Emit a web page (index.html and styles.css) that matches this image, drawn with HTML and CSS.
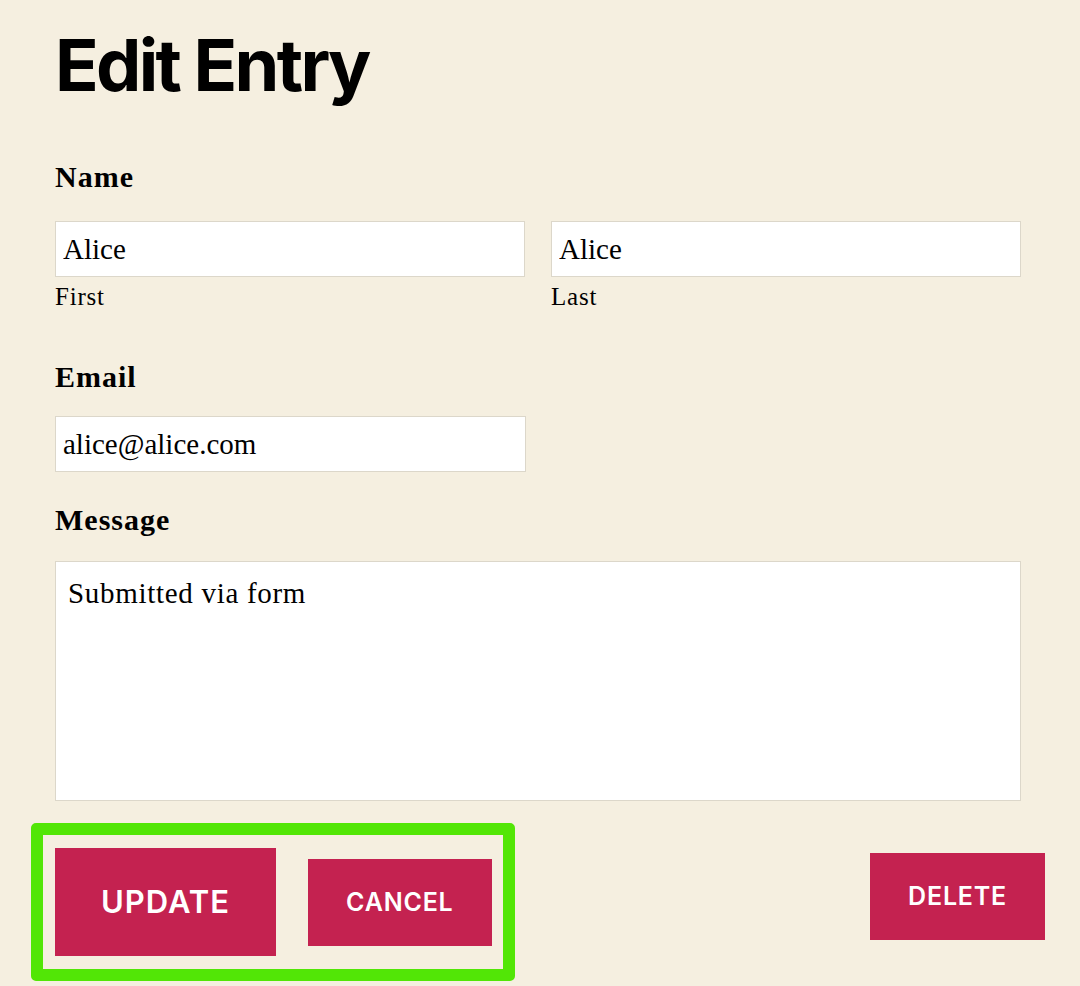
FILE: index.html
```html
<!DOCTYPE html>
<html lang="en">
<head>
<meta charset="utf-8">
<title>Edit Entry</title>
<link rel="stylesheet" href="styles.css">
</head>
<body>
<main class="page">
  <h1 class="title">Edit Entry</h1>
  <form class="entry-form">
    <div class="field field-name">
      <div class="label">Name</div>
      <div class="name-row">
        <div class="name-part">
          <input class="text-input" type="text" value="Alice">
          <span class="sublabel">First</span>
        </div>
        <div class="name-part">
          <input class="text-input" type="text" value="Alice">
          <span class="sublabel">Last</span>
        </div>
      </div>
    </div>
    <div class="field field-email">
      <div class="label">Email</div>
      <input class="text-input email-input" type="text" value="alice@alice.com">
    </div>
    <div class="field field-message">
      <div class="label">Message</div>
      <textarea class="text-area">Submitted via form</textarea>
    </div>
    <div class="actions">
      <div class="focus-group">
        <button type="button" class="btn btn-large">Update</button>
        <button type="button" class="btn">Cancel</button>
      </div>
      <button type="button" class="btn btn-delete">Delete</button>
    </div>
  </form>
</main>
</body>
</html>
```
FILE: styles.css
```css
html, body {
  margin: 0;
  padding: 0;
  background: #f5efe0;
}
body {
  color: #000;
  font-family: "Liberation Serif", "Times New Roman", serif;
}
.page {
  padding: 0 59px 0 55px;
}
.title {
  margin: 0;
  padding-top: 25px;
  font-family: Inter, "Liberation Sans", sans-serif;
  font-weight: 700;
  font-size: 72px;
  line-height: 79px;
  letter-spacing: -2.7px;
}
.entry-form {
  display: flex;
  flex-direction: column;
}
.label {
  font-weight: 700;
  font-size: 30px;
  line-height: 34px;
  letter-spacing: 1px;
}
.field-name {
  margin-top: 56px;
}
.field-name .label {
  margin-bottom: 27px;
}
.name-row {
  display: flex;
  gap: 26px;
}
.name-part {
  flex: 1;
  display: flex;
  flex-direction: column;
}
.text-input {
  box-sizing: border-box;
  height: 56px;
  margin: 0;
  padding: 0 7px;
  border: 1px solid #dcd7ca;
  border-radius: 0;
  background: #fff;
  font-family: "Liberation Serif", "Times New Roman", serif;
  font-size: 29px;
  color: #000;
  outline: none;
}
.sublabel {
  margin-top: 5px;
  font-size: 25px;
  line-height: 30px;
  letter-spacing: 0.8px;
}
.field-email {
  margin-top: 48px;
}
.field-email .label {
  margin-bottom: 22px;
}
.email-input {
  width: 471px;
}
.field-message {
  margin-top: 31px;
}
.field-message .label {
  margin-bottom: 24px;
}
.text-area {
  display: block;
  box-sizing: border-box;
  width: 100%;
  height: 240px;
  margin: 0;
  padding: 15px 12px;
  border: 1px solid #dcd7ca;
  border-radius: 0;
  background: #fff;
  font-family: "Liberation Serif", "Times New Roman", serif;
  font-size: 29px;
  line-height: 32px;
  letter-spacing: 0.7px;
  color: #000;
  resize: none;
  outline: none;
}
.actions {
  display: flex;
  justify-content: space-between;
  align-items: flex-start;
  margin: 22px -24px 0;
}
.focus-group {
  display: flex;
  align-items: center;
  gap: 32px;
  padding: 13px 11px 13px 12px;
  border: 12px solid #52e606;
  border-radius: 5px;
}
.btn {
  margin: 0;
  border: 0;
  border-radius: 0;
  background: #c42250;
  color: #fff;
  font-family: Inter, "Liberation Sans", sans-serif;
  font-weight: 600;
  font-size: 25px;
  line-height: 31px;
  letter-spacing: 0.8px;
  text-transform: uppercase;
  padding: 28px 38px;
  cursor: pointer;
}
.btn-large {
  font-size: 31px;
  line-height: 38px;
  letter-spacing: 1px;
  padding: 35px 46px;
}
.btn-delete {
  margin-top: 30px;
}
```
